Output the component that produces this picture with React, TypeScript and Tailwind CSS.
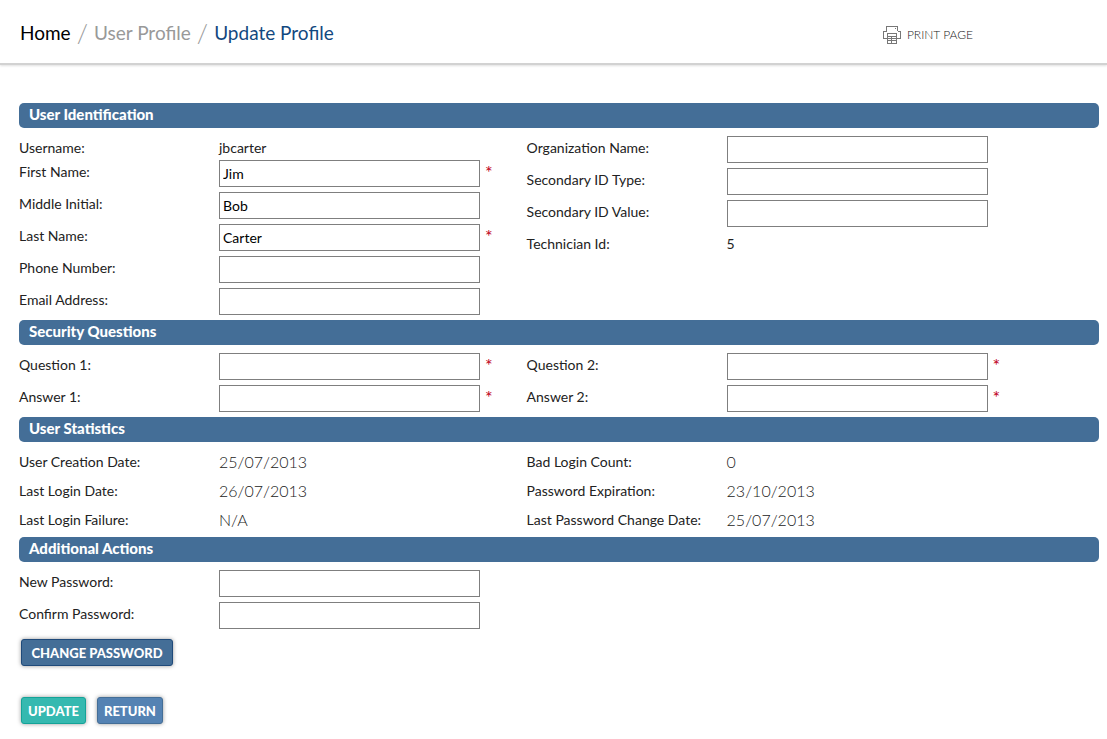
import { useId, type ReactNode } from "react";

function Row({ label, children, height = "h-8" }: { label: string; children: ReactNode; height?: string }) {
  return (
    <div className={`flex items-start ${height}`}>
      <dt className="w-[200px] shrink-0 leading-6">{label}</dt>
      <dd className="leading-6">{children}</dd>
    </div>
  );
}

function DateRow({ label, children }: { label: string; children: ReactNode }) {
  return (
    <Row label={label} height="h-[29px]">
      <span className="text-[16px] font-light">{children}</span>
    </Row>
  );
}

function Field({
  label,
  value = "",
  required = false,
  type = "text",
}: {
  label: string;
  value?: string;
  required?: boolean;
  type?: string;
}) {
  const id = useId();
  return (
    <div className="flex h-8 items-start">
      <label htmlFor={id} className="w-[200px] shrink-0 leading-6">
        {label}
      </label>
      <input
        id={id}
        type={type}
        defaultValue={value}
        required={required}
        className="h-[27px] w-[261px] border border-[#7f7f7f] bg-white px-[3px] text-black shadow-none outline-none"
      />
      {required && <span className="ml-[5px] text-[18px] leading-6 text-[#c00020]">*</span>}
    </div>
  );
}

function Section({ title, left, right }: { title: string; left: ReactNode; right?: ReactNode }) {
  return (
    <section>
      <h2 className="h-[25px] rounded-[5px] bg-[#446e97] px-[10px] text-[15px] leading-[23px] font-black text-white">
        {title}
      </h2>
      <div className="grid grid-cols-[47%_1fr] pt-2">
        <div>{left}</div>
        <div>{right}</div>
      </div>
    </section>
  );
}

function PrintIcon() {
  return (
    <svg width="18" height="18" viewBox="0 0 18 18" fill="none" stroke="#777" shapeRendering="crispEdges" aria-hidden="true">
      <path d="M3.5 5V.5H14.5V5" />
      <path d="M4 12.5H.5V5.5H3.5M14.5 5.5H17.5V12.5H14" />
      <path d="M12 2.5H13" />
      <path d="M4.5 7.5H13.5V17.5H4.5ZM4 10.5H14M4 12.5H14M4 14.5H14M8.5 10V17" />
    </svg>
  );
}

export default function App() {
  return (
    <div className="bg-white pb-3 font-['Lato',sans-serif] text-[14px] text-[#222]">
      <header className="flex h-[65px] items-start border-b-2 border-[#d2d2d2] pr-[134px] pl-5 shadow-[0_1px_2px_rgba(0,0,0,0.12)]">
        <nav aria-label="Breadcrumb" className="flex gap-[6px] pt-[19px] text-[19px] leading-7 text-[#999]">
          <a href="#home" className="text-black">Home</a>
          <span className="text-[26px] font-light">/</span>
          <a href="#profile">User Profile</a>
          <span className="text-[26px] font-light">/</span>
          <a href="#update" className="text-[#12487f]">Update Profile</a>
        </nav>
        <button type="button" className="mt-[25px] ml-auto flex items-center gap-[6px] text-[12px] leading-5 font-light text-[#222]">
          <PrintIcon />
          PRINT PAGE
        </button>
      </header>

      <form className="pt-[38px] pr-2 pl-[19px]">
        <Section
          title="User Identification"
          left={
            <>
              <dl><Row label="Username:" height="h-6">jbcarter</Row></dl>
              <Field label="First Name:" value="Jim" required />
              <Field label="Middle Initial:" value="Bob" />
              <Field label="Last Name:" value="Carter" required />
              <Field label="Phone Number:" />
              <Field label="Email Address:" />
            </>
          }
          right={
            <>
              <Field label="Organization Name:" />
              <Field label="Secondary ID Type:" />
              <Field label="Secondary ID Value:" />
              <dl><Row label="Technician Id:">5</Row></dl>
            </>
          }
        />
        <Section
          title="Security Questions"
          left={
            <>
              <Field label="Question 1:" required />
              <Field label="Answer 1:" required />
            </>
          }
          right={
            <>
              <Field label="Question 2:" required />
              <Field label="Answer 2:" required />
            </>
          }
        />
        <Section
          title="User Statistics"
          left={
            <dl>
              <DateRow label="User Creation Date:">25/07/2013</DateRow>
              <DateRow label="Last Login Date:">26/07/2013</DateRow>
              <DateRow label="Last Login Failure:">N/A</DateRow>
            </dl>
          }
          right={
            <dl>
              <DateRow label="Bad Login Count:">0</DateRow>
              <DateRow label="Password Expiration:">23/10/2013</DateRow>
              <DateRow label="Last Password Change Date:">25/07/2013</DateRow>
            </dl>
          }
        />
        <Section
          title="Additional Actions"
          left={
            <>
              <Field label="New Password:" type="password" />
              <Field label="Confirm Password:" type="password" />
            </>
          }
        />
        <div className="flex pt-[5px] pl-[2px] text-[13px] leading-6">
          <button type="button" className="h-[27px] min-w-[152px] rounded-[3px] border border-[#1f4a7a] bg-[#446e97] px-[6px] font-black text-white shadow-[0_0_4px_rgba(0,0,0,0.4)]">
            CHANGE PASSWORD
          </button>
        </div>
        <div className="flex gap-[11px] pt-[31px] pl-[2px] text-[13px] leading-6">
          <button type="submit" className="h-[27px] rounded-[3px] border border-[#14a398] bg-[#35b9b0] px-[6px] font-black text-white shadow-[0_0_4px_rgba(0,0,0,0.4)]">
            UPDATE
          </button>
          <button type="button" className="h-[27px] rounded-[3px] border border-[#446e97] bg-[#5482b3] px-[6px] font-black text-white shadow-[0_0_4px_rgba(0,0,0,0.4)]">
            RETURN
          </button>
        </div>
      </form>
    </div>
  );
}
